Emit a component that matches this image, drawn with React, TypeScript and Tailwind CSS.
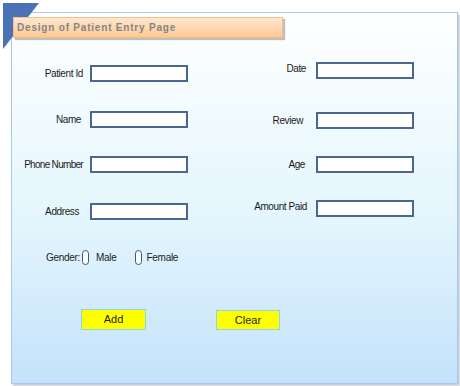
const font = { fontFamily: '"Liberation Sans", Arial, sans-serif' };

function Field({ label, labelW, gap, className }: { label: string; labelW: string; gap: string; className?: string }) {
  return (
    <div className={"flex items-center " + (className ?? "")}>
      <span className={"whitespace-nowrap text-right text-[10px] leading-none tracking-[-0.4px] text-[#1b1b1b] " + labelW}>{label}</span>
      <input className={"h-[17px] w-[98px] border-2 border-[#4a6791] bg-white outline-none " + gap} />
    </div>
  );
}

function Radio({ label, gap }: { label: string; gap: string }) {
  return (
    <label className="flex items-center">
      <span className="h-[15px] w-[7px] rounded-full border-[1.5px] border-[#3d5677] bg-white" />
      <span className={"text-[10px] leading-none tracking-[-0.3px] text-[#1b1b1b] " + gap}>{label}</span>
    </label>
  );
}

export default function App() {
  return (
    <div className="relative h-[386px] w-[460px] bg-white pl-[11px] pt-[12px]" style={font}>
      <svg className="absolute left-0 top-0 z-10" width="44" height="52" viewBox="0 0 44 52">
        <polygon points="3,3 39,3 3,49" fill="#4a72b5" />
      </svg>

      <div className="h-[372px] w-[447px] border border-[#a8c8ee] bg-[linear-gradient(to_bottom,#ffffff,#f2fbfe_25%,#e4f6fd_55%,#c4e2fb)] shadow-[2px_2px_2px_rgba(90,110,140,0.35)]">
        <div className="relative z-20 ml-[1px] mt-[4px] flex h-[21px] w-[270px] items-center border border-[#f5bf85] bg-[linear-gradient(to_bottom,#fee7cf,#fcc992)] pl-[3px] shadow-[2px_2px_1px_rgba(0,0,0,0.25)]">
          <span className="text-[10px] font-bold tracking-[0.8px] text-[#858585]">
            Design of Patient Entry Page
          </span>
        </div>

        <div className="flex">
          <div className="flex w-[176px] flex-col">
            <Field label="Patient Id" labelW="w-[72px]" gap="ml-[7px]" className="mt-[27px]" />
            <Field label="Name" labelW="w-[70px]" gap="ml-[9px]" className="mt-[29px]" />
            <Field label="Phone Number" labelW="w-[72px] tracking-[-0.7px]" gap="ml-[7px]" className="mt-[28px]" />
            <Field label="Address" labelW="w-[68px]" gap="ml-[11px]" className="mt-[30px]" />
          </div>
          <div className="ml-[58px] flex flex-col">
            <Field label="Date" labelW="w-[60px]" gap="ml-[10px]" className="mt-[24px] [&>span]:-translate-y-[2px]" />
            <Field label="Review" labelW="w-[57px]" gap="ml-[13px]" className="mt-[33px]" />
            <Field label="Age" labelW="w-[59px]" gap="ml-[11px]" className="mt-[27px]" />
            <Field label="Amount Paid" labelW="w-[61px]" gap="ml-[9px]" className="mt-[27px] [&>span]:-translate-y-[2px]" />
          </div>
        </div>

        <div className="ml-[34px] mt-[30px] flex items-center">
          <span className="text-[10px] leading-none tracking-[-0.3px] text-[#1b1b1b]">Gender:</span>
          <div className="ml-[2px]">
            <Radio label="Male" gap="ml-[7px]" />
          </div>
          <div className="ml-[18px]">
            <Radio label="Female" gap="ml-[5px]" />
          </div>
        </div>

        <div className="ml-[69px] mt-[44px] flex items-start">
          <button className="h-[21px] w-[65px] border border-[#8fd3e6] bg-[#ffff00] text-[11px] text-[#1b1b1b]">Add</button>
          <button className="ml-[70px] mt-[1px] h-[20px] w-[64px] border border-[#8fd3e6] bg-[#ffff00] text-[11px] text-[#1b1b1b]">Clear</button>
        </div>
      </div>
    </div>
  );
}
